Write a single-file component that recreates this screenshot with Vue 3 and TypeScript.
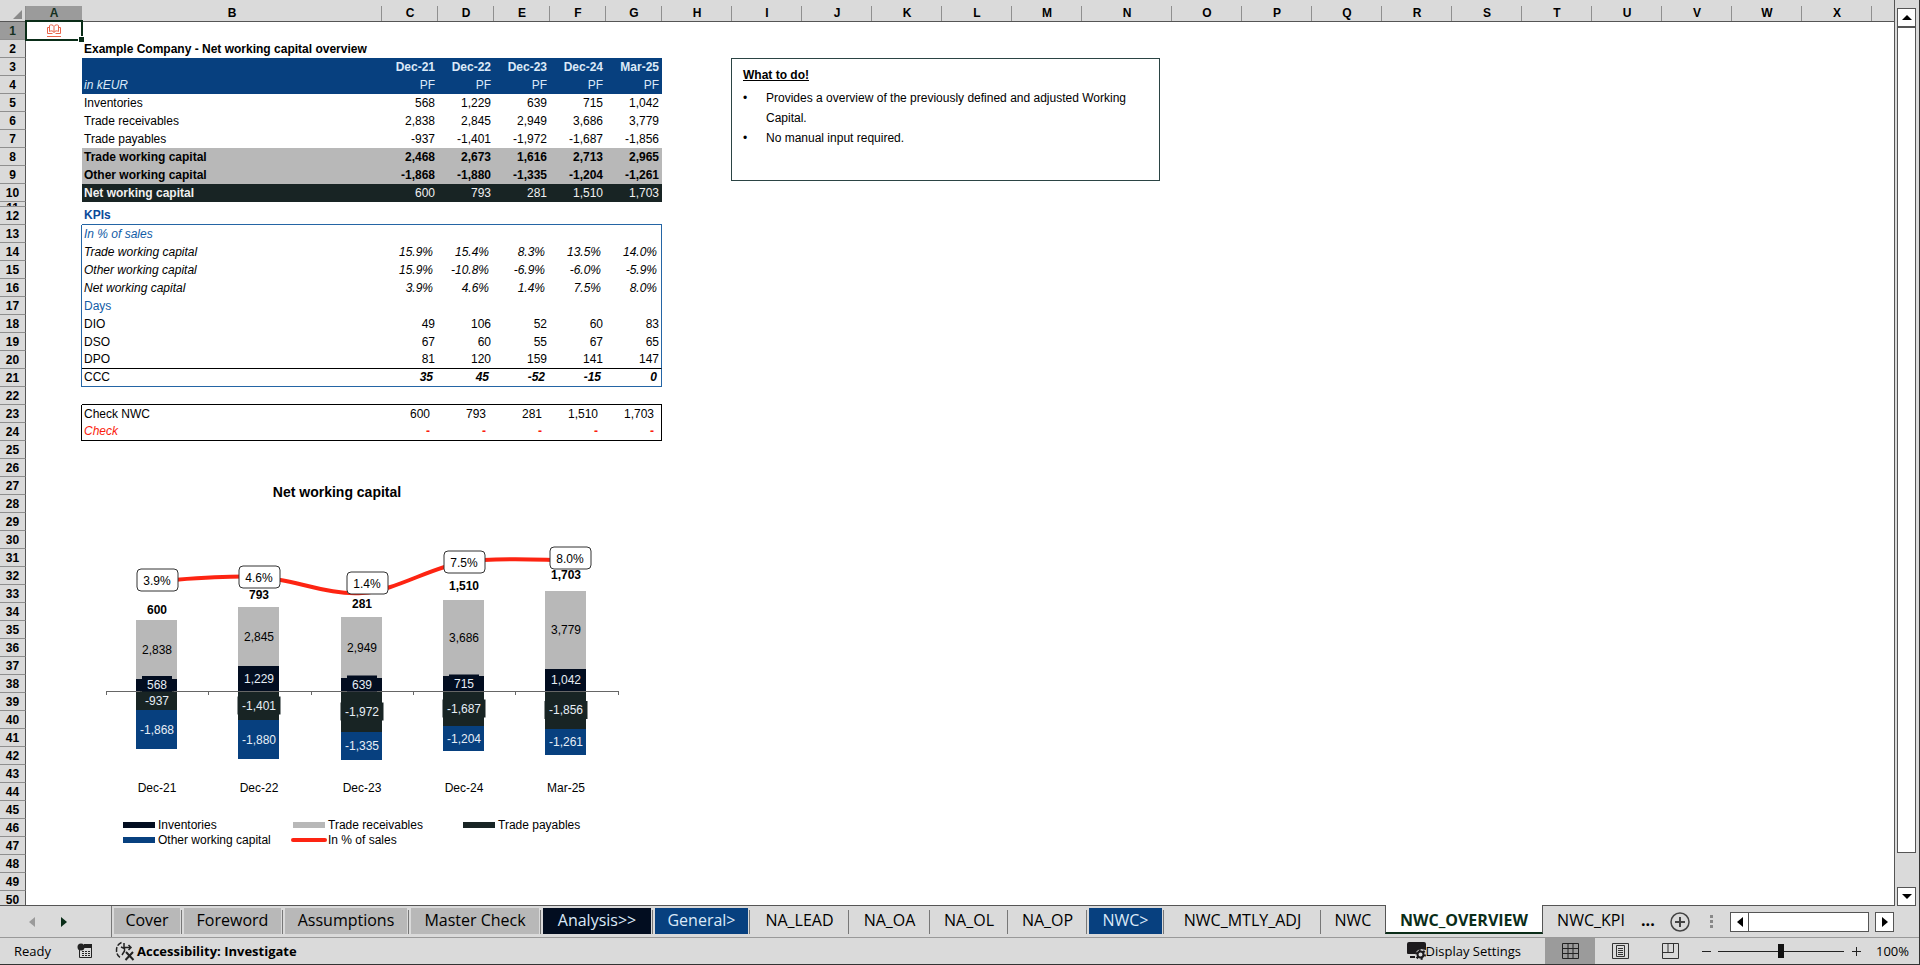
<script setup lang="ts">
import { ref } from 'vue'

interface SheetRow {
  n: number
  kind: string
  label?: string
  values?: string[]
}

interface SheetTab {
  name: string
  tone: string
  width: number
}

const letters = 'ABCDEFGHIJKLMNOPQRSTUVWX'.split('')

const content: Record<number, Omit<SheetRow, 'n'>> = {
  2: { kind: 'strong', label: 'Example Company - Net working capital overview' },
  3: { kind: 'head period', label: '', values: ['Dec-21', 'Dec-22', 'Dec-23', 'Dec-24', 'Mar-25'] },
  4: { kind: 'head unit', label: 'in kEUR', values: ['PF', 'PF', 'PF', 'PF', 'PF'] },
  5: { kind: 'plain', label: 'Inventories', values: ['568', '1,229', '639', '715', '1,042'] },
  6: { kind: 'plain', label: 'Trade receivables', values: ['2,838', '2,845', '2,949', '3,686', '3,779'] },
  7: { kind: 'plain', label: 'Trade payables', values: ['-937', '-1,401', '-1,972', '-1,687', '-1,856'] },
  8: { kind: 'subtotal', label: 'Trade working capital', values: ['2,468', '2,673', '1,616', '2,713', '2,965'] },
  9: { kind: 'subtotal', label: 'Other working capital', values: ['-1,868', '-1,880', '-1,335', '-1,204', '-1,261'] },
  10: { kind: 'total', label: 'Net working capital', values: ['600', '793', '281', '1,510', '1,703'] },
  11: { kind: 'thin' },
  12: { kind: 'kpi-title', label: 'KPIs', values: ['', '', '', '', ''] },
  13: { kind: 'kpi group slanted', label: 'In % of sales', values: ['', '', '', '', ''] },
  14: { kind: 'kpi slanted', label: 'Trade working capital', values: ['15.9%', '15.4%', '8.3%', '13.5%', '14.0%'] },
  15: { kind: 'kpi slanted', label: 'Other working capital', values: ['15.9%', '-10.8%', '-6.9%', '-6.0%', '-5.9%'] },
  16: { kind: 'kpi slanted', label: 'Net working capital', values: ['3.9%', '4.6%', '1.4%', '7.5%', '8.0%'] },
  17: { kind: 'kpi group', label: 'Days', values: ['', '', '', '', ''] },
  18: { kind: 'kpi', label: 'DIO', values: ['49', '106', '52', '60', '83'] },
  19: { kind: 'kpi', label: 'DSO', values: ['67', '60', '55', '67', '65'] },
  20: { kind: 'kpi ruled', label: 'DPO', values: ['81', '120', '159', '141', '147'] },
  21: { kind: 'kpi ccc', label: 'CCC', values: ['35', '45', '-52', '-15', '0'] },
  22: { kind: 'check-top', label: '', values: ['', '', '', '', ''] },
  23: { kind: 'check', label: 'Check NWC', values: ['600', '793', '281', '1,510', '1,703'] },
  24: { kind: 'check alert', label: 'Check', values: ['-', '-', '-', '-', '-'] },
}

const rows: SheetRow[] = Array.from({ length: 50 }, (_, i) => ({
  n: i + 1,
  ...(content[i + 1] ?? { kind: 'empty' }),
}))

const tabs: SheetTab[] = [
  { name: 'Cover', tone: 'grey', width: 70 },
  { name: 'Foreword', tone: 'grey', width: 101 },
  { name: 'Assumptions', tone: 'grey', width: 126 },
  { name: 'Master Check', tone: 'grey', width: 132 },
  { name: 'Analysis>>', tone: 'navy', width: 112 },
  { name: 'General>', tone: 'blue', width: 97 },
  { name: 'NA_LEAD', tone: 'none', width: 99 },
  { name: 'NA_OA', tone: 'none', width: 81 },
  { name: 'NA_OL', tone: 'none', width: 78 },
  { name: 'NA_OP', tone: 'none', width: 79 },
  { name: 'NWC>', tone: 'blue', width: 77 },
  { name: 'NWC_MTLY_ADJ', tone: 'none', width: 157 },
  { name: 'NWC', tone: 'none', width: 64 },
  { name: 'NWC_OVERVIEW', tone: 'none', width: 158 },
  { name: 'NWC_KPI', tone: 'last', width: 96 },
]
const activeTab = ref('NWC_OVERVIEW')
const zoom = ref(50)

/* Chart geometry */
const AXIS = 221
const SCALE = 0.0207
const BAR = 41

const periods = [
  { name: 'Dec-21', x: 75, inv: 568, rec: 2838, pay: 937, other: 1868, total: '600', totalY: 140, pct: '3.9%', lineY: 111, tagX: 75, tagY: 110 },
  { name: 'Dec-22', x: 177, inv: 1229, rec: 2845, pay: 1401, other: 1880, total: '793', totalY: 125, pct: '4.6%', lineY: 107, tagX: 177, tagY: 107 },
  { name: 'Dec-23', x: 280, inv: 639, rec: 2949, pay: 1972, other: 1335, total: '281', totalY: 134, pct: '1.4%', lineY: 123, tagX: 285, tagY: 113 },
  { name: 'Dec-24', x: 382, inv: 715, rec: 3686, pay: 1687, other: 1204, total: '1,510', totalY: 116, pct: '7.5%', lineY: 92, tagX: 382, tagY: 92 },
  { name: 'Mar-25', x: 484, inv: 1042, rec: 3779, pay: 1856, other: 1261, total: '1,703', totalY: 105, pct: '8.0%', lineY: 90, tagX: 488, tagY: 88 },
]

const fmt = (v: number) => v.toLocaleString('en-US')

const bars = periods.map((p) => {
  const h = (v: number) => Math.round(v * SCALE)
  const inv = h(p.inv)
  const rec = h(p.rec)
  const pay = h(p.pay)
  const other = h(p.other)
  return {
    ...p,
    left: p.x - 21,
    segments: [
      { key: 'inv', y: AXIS - inv, h: inv, text: fmt(p.inv), box: p.inv < 1000 ? 30 : 38 },
      { key: 'rec', y: AXIS - inv - rec, h: rec, text: fmt(p.rec), box: 0 },
      { key: 'pay', y: AXIS, h: pay, text: fmt(-p.pay), box: p.pay < 1000 ? 34 : 43 },
      { key: 'other', y: AXIS + pay, h: other, text: fmt(-p.other), box: 0 },
    ],
  }
})

/* Smoothed line through the ratio points */
const linePath = (() => {
  const pts = periods.map((p) => [p.x, p.lineY])
  let d = `M${pts[0][0]} ${pts[0][1]}`
  for (let i = 0; i < pts.length - 1; i++) {
    const a = pts[Math.max(i - 1, 0)]
    const b = pts[i]
    const c = pts[i + 1]
    const e = pts[Math.min(i + 2, pts.length - 1)]
    d += ` C${b[0] + (c[0] - a[0]) / 6} ${b[1] + (c[1] - a[1]) / 6} ${c[0] - (e[0] - b[0]) / 6} ${c[1] - (e[1] - b[1]) / 6} ${c[0]} ${c[1]}`
  }
  return d
})()

const ticks = [24, 126, 229, 331, 433, 536]
</script>

<template>
  <div class="app">
    <div class="workspace">
      <main class="pane">
        <table class="grid">
          <colgroup>
            <col class="w-num" />
            <col v-for="l in letters" :key="l" :class="'w-' + l" />
            <col />
          </colgroup>
          <thead>
            <tr>
              <th class="corner"><svg width="9" height="9" viewBox="0 0 9 9"><path d="M9 0V9H0Z" fill="#8a8a8a" /></svg></th>
              <th v-for="l in letters" :key="l" scope="col" :class="{ picked: l === 'A' }">{{ l }}</th>
              <th class="rest"></th>
            </tr>
          </thead>
          <tbody>
            <tr v-for="row in rows" :key="row.n" :class="row.kind">
              <th scope="row" :class="{ picked: row.n === 1 }"><div class="rownum">{{ row.n }}</div></th>
              <td class="a">
                <div v-if="row.n === 1" class="selected">
                  <a href="#contents" aria-label="Contents">
                    <svg width="14" height="13" viewBox="0 0 14 13" fill="none" stroke="#e8654a">
                      <path d="M7 2.5C6 .5 3.500 .5 2.500 1.500V7.500C4 6.500 6 6.500 7 8.500C8 6.500 10 6.500 11.500 7.500V1.500C10.500 .5 8 .5 7 2.500V8.500M2.500 3.500H.5V9.500H5.500M8.500 9.500H13.500V3.500H11.500" />
                      <path d="M0 12.500H14" />
                    </svg>
                  </a>
                </div>
              </td>
              <td class="label">{{ row.label }}</td>
              <template v-if="row.values">
                <td v-for="(v, i) in row.values" :key="i" class="num">{{ v }}</td>
                <td colspan="18"></td>
              </template>
              <td v-else colspan="23"></td>
            </tr>
          </tbody>
        </table>

        <section class="note">
          <h2>What to do!</h2>
          <ul>
            <li>Provides a overview of the previously defined and adjusted Working Capital.</li>
            <li>No manual input required.</li>
          </ul>
        </section>

        <svg class="chart" width="580" height="400" viewBox="0 0 580 400" role="img" aria-label="Net working capital">
          <text class="title" x="255" y="27">Net working capital</text>
          <g v-for="b in bars" :key="b.name">
            <template v-for="s in b.segments" :key="s.key">
              <rect :class="s.key" :x="b.left" :y="s.y" :width="BAR" :height="s.h" />
            </template>
          </g>
          <path d="M24 221H536" class="axis" />
          <path v-for="t in ticks" :key="t" :d="`M${t} 221v4`" class="axis" />
          <g v-for="b in bars" :key="b.name">
            <template v-for="s in b.segments" :key="s.key">
              <rect
                v-if="s.box"
                :class="s.key"
                :x="b.x - s.box / 2"
                :y="s.y + s.h / 2 - 9"
                :width="s.box"
                :height="s.key === 'inv' ? 16 : 18"
              />
              <text :class="['val', 't-' + s.key]" :x="b.x" :y="s.y + s.h / 2 + 4">{{ s.text }}</text>
            </template>
            <text class="val sum" :x="b.x" :y="b.totalY + 4">{{ b.total }}</text>
            <text class="val" :x="b.x" y="322">{{ b.name }}</text>
          </g>
          <path :d="linePath" class="trend" />
          <g v-for="b in bars" :key="b.name">
            <rect class="tag" :x="b.tagX - 20" :y="b.tagY - 11" width="41" height="22" rx="4" />
            <text class="val" :x="b.tagX" :y="b.tagY + 5">{{ b.pct }}</text>
          </g>
          <rect class="inv" x="41" y="352" width="32" height="6" />
          <text x="76" y="359">Inventories</text>
          <rect class="rec" x="211" y="352" width="32" height="6" />
          <text x="246" y="359">Trade receivables</text>
          <rect class="pay" x="381" y="352" width="32" height="6" />
          <text x="416" y="359">Trade payables</text>
          <rect class="other" x="41" y="367" width="32" height="6" />
          <text x="76" y="374">Other working capital</text>
          <path d="M211 370H243" class="trend" />
          <text x="246" y="374">In % of sales</text>
        </svg>
      </main>

      <div class="vscroll">
        <button type="button" aria-label="Scroll up"><svg width="10" height="5" viewBox="0 0 10 5"><path d="M5 0L10 5H0Z" /></svg></button>
        <div class="vthumb"></div>
        <button type="button" aria-label="Scroll down"><svg width="10" height="5" viewBox="0 0 10 5"><path d="M0 0H10L5 5Z" /></svg></button>
      </div>
    </div>

    <nav class="tabbar">
      <div class="arrows">
        <button type="button" aria-label="Previous sheet"><svg width="6" height="10" viewBox="0 0 6 10"><path d="M6 0V10L0 5Z" fill="#9a9a9a" /></svg></button>
        <button type="button" aria-label="Next sheet"><svg width="6" height="10" viewBox="0 0 6 10"><path d="M0 0V10L6 5Z" fill="#0a2d18" /></svg></button>
      </div>
      <button
        v-for="t in tabs"
        :key="t.name"
        type="button"
        :class="['tab', t.tone, { active: t.name === activeTab, before: t.name === 'NWC' }]"
        :style="{ width: t.width + 'px' }"
        @click="activeTab = t.name"
      ><span>{{ t.name }}</span></button>
      <button type="button" class="more" aria-label="More sheets">...</button>
      <button type="button" class="add" aria-label="New sheet">
        <svg width="20" height="20" viewBox="0 0 20 20" fill="none" stroke="#444"><circle cx="10" cy="10" r="9" stroke-width="1.5" /><path d="M10 5V15M5 10H15" stroke-width="2" /></svg>
      </button>
      <svg class="grip" width="4" height="14" viewBox="0 0 4 14" fill="#888"><path d="M0 0H3V3H0ZM0 5H3V8H0ZM0 10H3V13H0Z" /></svg>
      <div class="hscroll">
        <button type="button" aria-label="Scroll left"><svg width="6" height="10" viewBox="0 0 6 10"><path d="M6 0V10L0 5Z" /></svg></button>
        <div class="hthumb"></div>
        <button type="button" class="right" aria-label="Scroll right"><svg width="6" height="10" viewBox="0 0 6 10"><path d="M0 0V10L6 5Z" /></svg></button>
      </div>
    </nav>

    <footer class="status">
      <span class="ready">Ready</span>
      <button type="button" class="macro" aria-label="Record macro">
        <svg width="16" height="16" viewBox="0 0 16 16">
          <path d="M2.5 4V14.5H14.5V2" fill="none" stroke="#222" />
          <path d="M7 1H15V5H7Z" fill="#222" /><circle cx="4" cy="4" r="3.5" fill="#222" />
          <path d="M5 8.5H13M5 10.5H13M5 12.5H13" stroke="#222" stroke-dasharray="2 1" />
        </svg>
      </button>
      <button type="button" class="access">
        <svg width="20" height="20" viewBox="0 0 20 20" fill="none" stroke="#222">
          <path d="M6.500 1.500C0 4 0 13 5 16.500" stroke-width="1.500" stroke-dasharray="5 1.500" />
          <path d="M9 2V7M6 6L9.500 7.500V10L7 14M9.500 6.500H15.500M13.500 4L16 6.500L13.500 9" stroke-width="1.500" />
          <path d="M11 11L18.500 19M18 11L10.500 19" stroke-width="2" />
        </svg>
        Accessibility: Investigate
      </button>
      <span class="gap"></span>
      <button type="button" class="display">
        <svg width="19" height="18" viewBox="0 0 19 18">
          <path d="M2 0H17Q19 0 19 2V8L13 7L8 12H1Q0 12 0 11V2Q0 0 2 0ZM3 14H8V16H3Z" fill="#1c1a1d" />
          <circle cx="13.5" cy="12.500" r="5" fill="#dadada" />
          <circle cx="13.5" cy="12.500" r="3" fill="none" stroke="#1c1a1d" stroke-width="2" />
          <circle cx="13.5" cy="12.500" r="4.500" fill="none" stroke="#1c1a1d" stroke-width="2" stroke-dasharray="2 2.700" />
        </svg>
        Display Settings
      </button>
      <button type="button" class="view on" aria-label="Normal view">
        <svg width="17" height="16" viewBox="0 0 17 16" fill="none" stroke="#222"><path d="M.5 .5H16.5V15.5H.5ZM6 .5V15.5M11 .5V15.5M.5 5.5H16.5M.5 10.5H16.5" /></svg>
      </button>
      <button type="button" class="view" aria-label="Page layout">
        <svg width="17" height="16" viewBox="0 0 17 16" fill="none" stroke="#333"><path d="M.5 .5H16.5V15.5H.5ZM4.5 2.5H12.5V13.5H4.5ZM6 5.5H11M6 7.5H11M6 9.5H11M6 11.5H11" /></svg>
      </button>
      <button type="button" class="view" aria-label="Page break preview">
        <svg width="17" height="16" viewBox="0 0 17 16" fill="none" stroke="#333"><path d="M.5 .5H16.5V15.5H.5ZM.5 9.5H11.5V.5M6 .5V9.5" /></svg>
      </button>
      <button type="button" class="step" aria-label="Zoom out"><svg width="9" height="9" viewBox="0 0 9 9"><path d="M0 4.5H9" stroke="#222" /></svg></button>
      <input v-model="zoom" type="range" min="0" max="100" aria-label="Zoom" />
      <button type="button" class="step" aria-label="Zoom in"><svg width="9" height="9" viewBox="0 0 9 9"><path d="M0 4.5H9M4.5 0V9" stroke="#222" /></svg></button>
      <span class="percent">100%</span>
    </footer>
  </div>
</template>

<style>
body {
  margin: 0;
  background: #dadada;
}
</style>

<style scoped>
.app {
  box-sizing: border-box;
  display: flex;
  flex-direction: column;
  height: 100vh;
  background: #dadada;
  border-right: 1px solid #333;
  border-bottom: 1px solid #333;
  color: #000;
  font-family: "Liberation Sans", Arial, sans-serif;
  font-size: 12px;
  overflow: hidden;
}
button {
  margin: 0;
  padding: 0;
  border: 0;
  background: none;
  color: inherit;
  font: inherit;
  display: flex;
  align-items: center;
  justify-content: center;
}
svg {
  display: block;
}
.workspace {
  flex: 1;
  min-height: 0;
  display: flex;
}
.pane {
  position: relative;
  flex: 1;
  min-width: 0;
  overflow: hidden;
  border-bottom: 1px solid #555;
}

/* Cells */
.grid {
  width: 100%;
  table-layout: fixed;
  border-collapse: separate;
  border-spacing: 0;
  background: #fff;
  border-right: 1px solid #555;
}
col { width: 70px; }
col:last-child { width: auto; }
col.w-num { width: 26px; }
col.w-A, col.w-C, col.w-D, col.w-E, col.w-F, col.w-G { width: 56px; }
col.w-B { width: 300px; }
col.w-N { width: 90px; }
th, td {
  box-sizing: border-box;
  height: 18px;
  padding: 0;
  line-height: 17px;
  white-space: nowrap;
}
thead th {
  height: 22px;
  padding-top: 6px;
  line-height: 15px;
  border-bottom: 1px solid #555;
  background: linear-gradient(#8f8f8f, #8f8f8f) right bottom / 1px 15px no-repeat #dadada;
}
thead .corner svg {
  margin: 2px 0 0 13px;
}
thead .picked {
  background: linear-gradient(#dadada 6px, #9b9b9b 6px);
  color: #14301f;
}
thead .rest {
  background: #dadada;
}
tbody th {
  border-right: 1px solid #555;
  border-bottom: 1px solid #8f8f8f;
  background: #dadada;
}
.rownum {
  height: 17px;
  box-sizing: border-box;
  padding-top: 1px;
  overflow: hidden;
}
tbody th.picked {
  background: #9b9b9b;
  color: #14301f;
}
.thin th, .thin td {
  height: 5px;
  line-height: 4px;
}
.thin .rownum {
  height: 4px;
  padding-top: 0;
  line-height: 12px;
}
.label {
  padding-left: 2px;
}
.num {
  padding-right: 3px;
  text-align: right;
}
.strong .label, .period .num, .subtotal .label, .subtotal .num, .total .label, .kpi-title .label, .ccc .num {
  font-weight: bold;
}
.head .label, .head .num {
  background: #07407f;
  color: #dbe9f8;
}
.unit .label, .slanted .label, .slanted .num, .ccc .num, .alert .label {
  font-style: italic;
}
.subtotal .label, .subtotal .num {
  background: #b8b8b8;
}
.total .label, .total .num {
  background: #182424;
  color: #f0f0f0;
}
.kpi-title .label {
  color: #0b4a9a;
}
.group .label {
  color: #125ca6;
}
.kpi-title .label, .kpi-title .num {
  border-bottom: 1px solid #2465a5;
}
.kpi .a {
  border-right: 1px solid #2465a5;
}
.kpi .num:nth-child(8) {
  border-right: 1px solid #2465a5;
  padding-right: 2px;
}
.slanted .num, .ccc .num {
  padding-right: 5px;
}
.slanted .num:nth-child(8), .ccc .num:nth-child(8) {
  padding-right: 4px;
}
.ruled .label, .ruled .num {
  border-bottom: 1px solid #000;
}
.ccc .label, .ccc .num {
  border-bottom: 1px solid #2465a5;
}
.check-top .label, .check-top .num, .alert .label, .alert .num {
  border-bottom: 1px solid #000;
}
.check .a {
  border-right: 1px solid #000;
}
.check .num {
  padding-right: 8px;
}
.check .num:nth-child(8) {
  border-right: 1px solid #000;
  padding-right: 7px;
}
.alert .label, .alert .num {
  color: #fb1d0e;
}
.alert .num {
  font-weight: bold;
}
.selected {
  position: absolute;
  box-sizing: border-box;
  left: 25px;
  top: 20px;
  width: 58px;
  height: 21px;
  border: 2px solid #0a2d18;
  display: flex;
  align-items: center;
  justify-content: center;
}
.selected::after {
  content: "";
  position: absolute;
  right: -3px;
  bottom: -3px;
  width: 5px;
  height: 5px;
  background: #0a2d18;
  border: 1px solid #fff;
  border-width: 1px 0 0 1px;
}

/* Floating objects */
.note {
  position: absolute;
  box-sizing: border-box;
  left: 731px;
  top: 58px;
  width: 429px;
  height: 123px;
  padding: 6px 20px 0 11px;
  border: 1px solid #2b4444;
  background: #fff;
}
.note h2 {
  margin: 0 0 3px;
  font-size: 12px;
  line-height: 20px;
  text-decoration: underline;
}
.note ul {
  margin: 0;
  padding: 0;
  list-style: none;
}
.note li {
  display: flex;
  line-height: 20px;
}
.note li::before {
  content: "•";
  flex: 0 0 23px;
}
.chart {
  position: absolute;
  left: 82px;
  top: 470px;
}
.chart .title {
  font-size: 14px;
  font-weight: bold;
  text-anchor: middle;
}
.val { text-anchor: middle; }
.sum { font-weight: bold; }
.inv { fill: #020d20; }
.rec { fill: #b8b8b8; }
.pay { fill: #182424; }
.other { fill: #07407f; }
.t-inv, .t-pay, .t-other { fill: #e6eef6; }
.axis { stroke: #666; fill: none; shape-rendering: crispEdges; }
.trend { stroke: #fd2412; stroke-width: 4px; fill: none; stroke-linecap: round; }
.tag { fill: #fff; stroke: #333; }

/* Scroll bar */
.vscroll {
  flex: 0 0 24px;
  box-sizing: border-box;
  display: flex;
  flex-direction: column;
  padding: 8px 3px 0 2px;
}
.vscroll button, .hscroll button {
  box-sizing: border-box;
  flex: 0 0 19px;
  border: 1px solid #555;
  background: #fff;
}
.vthumb {
  flex: 1;
  margin-bottom: 34px;
  border: 1px solid #555;
  background: #fff;
}

/* Sheet tabs */
.tabbar {
  flex: 0 0 32px;
  box-sizing: border-box;
  display: flex;
  border-bottom: 1px solid #999;
  font-family: "Open Sans", "Noto Sans", sans-serif;
  font-size: 16px;
}
.arrows {
  flex: 0 0 112px;
  box-sizing: border-box;
  display: flex;
  gap: 26px;
  padding-left: 29px;
  border-right: 1px solid #777;
}
.tab {
  box-sizing: border-box;
  flex: none;
  padding: 2px 2px 3px;
  background: linear-gradient(#777, #777) right 4px / 1px 24px no-repeat;
  line-height: 24px;
}
.tab span {
  flex: 1;
  height: 26px;
  white-space: nowrap;
}
.grey span { background: #b8b8b8; }
.navy span { background: #020d20; color: #dbe9f8; }
.blue span { background: #07407f; color: #dbe9f8; }
.before, .last {
  background: none;
}
.active {
  align-items: flex-start;
  margin-top: -1px;
  padding: 3px 0 0;
  background: #fff;
  border: 1px solid #555;
  border-top: 0;
  border-bottom: 2px solid #0a2d18;
  height: 29px;
  color: #0a2d18;
  font-weight: bold;
  position: relative;
}
.more {
  align-self: flex-start;
  line-height: 28px;
  margin-left: 2px;
  font-weight: bold;
}
.add {
  margin-left: 15px;
}
.grip {
  align-self: center;
  margin-left: 20px;
}
.hscroll {
  display: flex;
  height: 20px;
  margin: 6px 25px 0 auto;
}
.hthumb {
  box-sizing: border-box;
  width: 120px;
  border: 1px solid #555;
  border-left: 0;
  background: #fff;
}
.hscroll .right {
  margin-left: 6px;
}

/* Status bar */
.status {
  flex: 0 0 26px;
  display: flex;
  align-items: stretch;
  font-family: "Open Sans", "Noto Sans", sans-serif;
  font-size: 13px;
  line-height: 26px;
}
.ready {
  flex: 0 0 77px;
  box-sizing: border-box;
  padding-left: 14px;
}
.macro {
  margin-right: 22px;
}
.access {
  gap: 2px;
  font-weight: bold;
}
.gap {
  flex: 1;
}
.display {
  margin-right: 24px;
}
.view {
  width: 50px;
}
.on {
  background: #9b9b9b;
}
.step {
  width: 22px;
}
input[type="range"] {
  appearance: none;
  width: 126px;
  margin: 0 1px;
  background: linear-gradient(#222, #222) center / 100% 1px no-repeat;
}
input[type="range"]::-webkit-slider-thumb {
  appearance: none;
  width: 6px;
  height: 14px;
  background: #111;
}
.percent {
  width: 52px;
  padding-left: 9px;
  box-sizing: border-box;
}
</style>
